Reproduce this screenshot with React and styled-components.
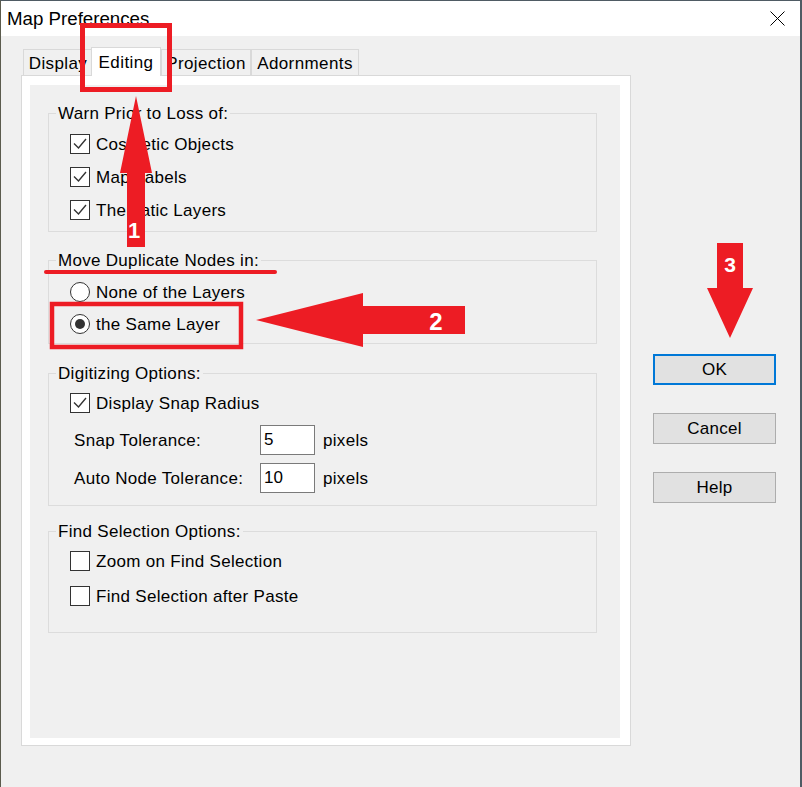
import React from "react";
import styled, { createGlobalStyle } from "styled-components";

const GlobalStyle = createGlobalStyle`
  html, body { margin: 0; padding: 0; background: #f0f0f0; }
  body { font-family: "Liberation Sans", Arial, sans-serif; color: #000; }
`;

const Window = styled.div`
  position: relative;
  width: 802px;
  height: 787px;
  box-sizing: border-box;
  background: #f0f0f0;
  border-top: 1px solid #4f5b64;
  border-left: 1px solid #5b5b4d;
  border-right: 2px solid #4f5b64;
  display: flex;
  flex-direction: column;
  overflow: hidden;
`;

const TitleBar = styled.div`
  height: 35px;
  flex: none;
  background: #fff;
  display: flex;
  align-items: center;
  justify-content: space-between;
  padding: 0 15px 0 6px;
`;

const Title = styled.span`
  font-size: 18.7px;
`;

const Body = styled.div`
  flex: 1;
  display: flex;
  padding: 11px 0 0 20px;
`;

const Main = styled.div`
  width: 610px;
  display: flex;
  flex-direction: column;
`;

const TabStrip = styled.div`
  display: flex;
  align-items: flex-end;
  height: 29px;
  padding-left: 2px;
  margin-bottom: -1px;
  position: relative;
  z-index: 1;
`;

const Tab = styled.div`
  box-sizing: border-box;
  width: ${(p) => p.$w}px;
  height: ${(p) => (p.$active ? 29 : 26)}px;
  margin: 0 0 ${(p) => (p.$active ? 0 : 1)}px ${(p) => (p.$active ? -2 : 0)}px;
  padding-top: 2px;
  background: ${(p) => (p.$active ? "#fff" : "#f0f0f0")};
  border: 1px solid #d9d9d9;
  border-bottom: none;
  display: flex;
  align-items: center;
  justify-content: center;
  font-size: 17px;
  letter-spacing: 0.4px;
  white-space: nowrap;
  overflow: hidden;
`;

const Panel = styled.div`
  box-sizing: border-box;
  height: 671px;
  background: #fff;
  border: 1px solid #d9d9d9;
  padding: 9px 10px 7px 8px;
  display: flex;
`;

const PanelInner = styled.div`
  flex: 1;
  background: #f0f0f0;
  padding: 17px 23px 0 18px;
  display: flex;
  flex-direction: column;
  font-size: 17px;
  letter-spacing: 0.3px;
`;

const Group = styled.fieldset`
  margin: ${(p) => p.$mt || 0}px 0 0;
  padding: 0;
  border: 1px solid #dcdcdc;
  min-width: 0;
`;

const Legend = styled.legend`
  margin-left: 7px;
  padding: 2px 2px 0;
  line-height: 20px;
`;

const GroupBody = styled.div`
  display: flex;
  flex-direction: column;
  padding: ${(p) => p.$pt}px 0 ${(p) => p.$pb}px 21px;
`;

const OptionRow = styled.label`
  display: flex;
  align-items: center;
  gap: 6px;
  height: ${(p) => p.$h}px;
`;

const Box = styled.span`
  width: 20px;
  height: 20px;
  box-sizing: border-box;
  border: 1px solid #333;
  background: #fff;
  display: flex;
  align-items: center;
  justify-content: center;
  flex: none;
`;

const RadioBox = styled(Box)`
  border-radius: 50%;
`;

const Dot = styled.span`
  width: 10px;
  height: 10px;
  border-radius: 50%;
  background: #333;
`;

const OptionText = styled.span`
  padding-top: 2px;
`;

const FieldRow = styled.div`
  display: flex;
  align-items: center;
  height: 38px;
  padding-left: 4px;
  margin-top: ${(p) => p.$mt || 0}px;
`;

const FieldLabel = styled.span`
  width: 186px;
  padding-top: 1px;
`;

const Input = styled.input`
  box-sizing: border-box;
  width: 55px;
  height: 30px;
  border: 1px solid #7a7a7a;
  background: #fff;
  padding: 0 3px;
  margin: 0;
  font-family: "Liberation Sans", Arial, sans-serif;
  font-size: 17px;
  color: #000;
  outline: none;
`;

const Unit = styled.span`
  margin-left: 8px;
  padding-top: 1px;
`;

const Side = styled.div`
  display: flex;
  flex-direction: column;
  gap: 28px;
  padding-top: 307px;
  margin-left: 22px;
`;

const Button = styled.button`
  box-sizing: border-box;
  width: 123px;
  height: 31px;
  margin: 0;
  padding: 0;
  background: #e1e1e1;
  border: ${(p) => (p.$default ? "2px solid #0078d7" : "1px solid #adadad")};
  font-family: "Liberation Sans", Arial, sans-serif;
  font-size: 17px;
  letter-spacing: 0.3px;
  color: #000;
`;

const Overlay = styled.svg`
  position: absolute;
  top: -1px;
  left: -1px;
  width: 802px;
  height: 787px;
  pointer-events: none;
  z-index: 5;
`;

const Check = () => (
  <svg width="18" height="18" viewBox="0 0 18 18">
    <polyline points="3,8.5 7.5,13 15,4" fill="none" stroke="#333" strokeWidth="1.4" />
  </svg>
);

const CheckOption = ({ checked, h, children }) => (
  <OptionRow $h={h}>
    <Box>{checked && <Check />}</Box>
    <OptionText>{children}</OptionText>
  </OptionRow>
);

const RadioOption = ({ checked, h, children }) => (
  <OptionRow $h={h}>
    <RadioBox>{checked && <Dot />}</RadioBox>
    <OptionText>{children}</OptionText>
  </OptionRow>
);

const RED = "#ed1c24";

const Annotations = () => (
  <Overlay viewBox="0 0 802 787">
    <rect x="82.5" y="25.5" width="87" height="64" fill="none" stroke={RED} strokeWidth="5" />
    <path d="M136,96 L120,173 L127,173 L127,247 L145,247 L145,173 L152,173 Z" fill={RED} />
    <text x="134" y="238" textAnchor="middle" fill="#fff" fontFamily="Liberation Sans, Arial, sans-serif" fontWeight="bold" fontSize="22">1</text>
    <line x1="46" y1="272" x2="275" y2="272" stroke={RED} strokeWidth="4" strokeLinecap="round" />
    <rect x="52" y="304" width="189" height="43" fill="none" stroke={RED} strokeWidth="4.5" />
    <path d="M256,320 L363,293 L363,306 L465,306 L465,334 L363,334 L363,347 Z" fill={RED} />
    <text x="436" y="330" textAnchor="middle" fill="#fff" fontFamily="Liberation Sans, Arial, sans-serif" fontWeight="bold" fontSize="24">2</text>
    <path d="M717,243 L743,243 L743,288 L753,288 L730,338 L707,288 L717,288 Z" fill={RED} />
    <text x="730" y="272" textAnchor="middle" fill="#fff" fontFamily="Liberation Sans, Arial, sans-serif" fontWeight="bold" fontSize="21">3</text>
  </Overlay>
);

export default function App() {
  return (
    <>
      <GlobalStyle />
      <Window>
        <TitleBar>
          <Title>Map Preferences</Title>
          <svg width="15" height="15" viewBox="0 0 15 15">
            <path d="M0.5,0.5 L14.5,14.5 M14.5,0.5 L0.5,14.5" stroke="#000" strokeWidth="1" />
          </svg>
        </TitleBar>
        <Body>
          <Main>
            <TabStrip>
              <Tab $w={70}>Display</Tab>
              <Tab $w={70} $active>Editing</Tab>
              <Tab $w={90}>Projection</Tab>
              <Tab $w={108}>Adornments</Tab>
            </TabStrip>
            <Panel>
              <PanelInner>
                <Group>
                  <Legend>Warn Prior to Loss of:</Legend>
                  <GroupBody $pt={3} $pb={5}>
                    <CheckOption checked h={33}>Cosmetic Objects</CheckOption>
                    <CheckOption checked h={33}>Map Labels</CheckOption>
                    <CheckOption checked h={33}>Thematic Layers</CheckOption>
                  </GroupBody>
                </Group>
                <Group $mt={17}>
                  <Legend>Move Duplicate Nodes in:</Legend>
                  <GroupBody $pt={5} $pb={3}>
                    <RadioOption h={32}>None of the Layers</RadioOption>
                    <RadioOption checked h={32}>the Same Layer</RadioOption>
                  </GroupBody>
                </Group>
                <Group $mt={18}>
                  <Legend>Digitizing Options:</Legend>
                  <GroupBody $pt={2} $pb={8}>
                    <CheckOption checked h={33}>Display Snap Radius</CheckOption>
                    <FieldRow $mt={2}>
                      <FieldLabel>Snap Tolerance:</FieldLabel>
                      <Input readOnly defaultValue="5" />
                      <Unit>pixels</Unit>
                    </FieldRow>
                    <FieldRow>
                      <FieldLabel>Auto Node Tolerance:</FieldLabel>
                      <Input readOnly defaultValue="10" />
                      <Unit>pixels</Unit>
                    </FieldRow>
                  </GroupBody>
                </Group>
                <Group $mt={14}>
                  <Legend>Find Selection Options:</Legend>
                  <GroupBody $pt={1} $pb={19}>
                    <CheckOption h={35}>Zoom on Find Selection</CheckOption>
                    <CheckOption h={35}>Find Selection after Paste</CheckOption>
                  </GroupBody>
                </Group>
              </PanelInner>
            </Panel>
          </Main>
          <Side>
            <Button $default>OK</Button>
            <Button>Cancel</Button>
            <Button>Help</Button>
          </Side>
        </Body>
        <Annotations />
      </Window>
    </>
  );
}
